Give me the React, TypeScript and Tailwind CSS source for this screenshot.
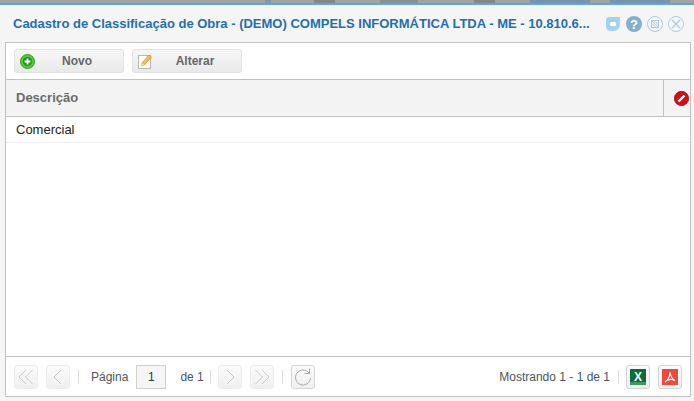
import React from "react";

function PagerBtn({ children, active }: { children: React.ReactNode; active?: boolean }) {
  return (
    <div className={`flex h-6 w-6 items-center justify-center rounded-[3px] border bg-gradient-to-b from-[#fbfbfb] to-[#f0f0f0] ${active ? "border-[#d4d4d4]" : "border-[#ececec]"}`}>
      {children}
    </div>
  );
}

const Sep = () => <div className="h-[14px] w-px bg-[#dcdcdc]" />;

function ToolBtn({ icon, label, w }: { icon: React.ReactNode; label: string; w: string }) {
  return (
    <div className={`flex h-6 items-center rounded-[3px] border border-[#e2e2e2] bg-gradient-to-b from-[#f6f6f6] via-[#f0f0f0] to-[#e9e9e9] ${w}`}>
      <div className="ml-1 flex h-4 w-4 shrink-0 items-center justify-center">{icon}</div>
      <span className="flex-1 pr-1 text-center text-[12px] font-bold text-[#666]">{label}</span>
    </div>
  );
}

const strip: [string, string][] = [
  ["w-[265px]", "bg-[#a3a3a3]"],
  ["w-[6px]", "bg-[#7f97ab]"],
  ["w-[43px]", "bg-[#a3a3a3]"],
  ["w-[21px]", "bg-[#858585]"],
  ["w-[45px]", "bg-[#a3a3a3]"],
  ["w-[38px]", "bg-[#878f94]"],
  ["w-[56px]", "bg-[#a3a3a3]"],
  ["w-[21px]", "bg-[#858585]"],
  ["w-[35px]", "bg-[#a3a3a3]"],
  ["w-[60px]", "bg-[#7893a9]"],
  ["w-[20px]", "bg-[#a3a3a3]"],
  ["w-[60px]", "bg-[#7893a9]"],
  ["w-[24px]", "bg-[#a3a3a3]"],
];

export default function App() {
  return (
    <div className="flex h-[401px] w-[694px] flex-col overflow-hidden bg-[#f5f5f5] font-['Liberation_Sans',Arial,sans-serif]">
      <div className="flex h-[3px] shrink-0">
        {strip.map(([w, c], i) => (
          <div key={i} className={`${w} ${c}`} />
        ))}
      </div>
      <div className="h-[2px] shrink-0 bg-[#5ea5e3]" />
      <div className="flex h-[37px] shrink-0 items-center pl-[13px] pr-[10px]">
        <span className="w-[582px] whitespace-nowrap text-[13px] font-bold text-[#1f6fae]">
          Cadastro de Classificação de Obra - (DEMO) COMPELS INFORMÁTICA LTDA - ME - 10.810.6...
        </span>
        <div className="ml-auto flex items-center gap-[5px]">
          <svg width="16" height="16" viewBox="0 0 16 16">
            <path d="M1 4 Q1 1 4 1 H15 V8 Q15 15 8 15 H6 Q1 15 1 10 Z" fill="#a6d2f2" />
            <rect x="5" y="6" width="6" height="4" rx="1.5" fill="#fff" />
          </svg>
          <svg width="16" height="16" viewBox="0 0 16 16">
            <circle cx="8" cy="8" r="8" fill="#84afcf" />
            <text x="8" y="12.8" textAnchor="middle" fontSize="13" fontWeight="bold" fill="#fff" fontFamily="Liberation Sans">?</text>
          </svg>
          <svg width="16" height="16" viewBox="0 0 16 16" fill="none" stroke="#a9cde6">
            <circle cx="8" cy="8" r="7.5" />
            <rect x="4.5" y="4.5" width="7" height="7" />
            <path d="M4.5 4.5 L11.5 11.5 M7 4.5 L11.5 9 M4.5 7 L9 11.5" />
          </svg>
          <svg width="16" height="16" viewBox="0 0 16 16" fill="none" stroke="#a9cde6">
            <circle cx="8" cy="8" r="7.5" />
            <path d="M4 4 L12 12 M12 4 L4 12" strokeWidth="1.2" />
          </svg>
        </div>
      </div>

      <div className="mx-[5px] flex h-[355px] w-[686px] flex-col border border-[#c2c2c2] bg-white">
        <div className="flex h-[37px] shrink-0 items-center gap-2 border-b border-[#c2c2c2] pl-2">
          <ToolBtn
            w="w-[110px]"
            label="Novo"
            icon={
              <svg width="15" height="15" viewBox="0 0 15 15">
                <circle cx="7.5" cy="7.5" r="7" fill="#56c93f" stroke="#2b9a1f" />
                <circle cx="7.5" cy="7.5" r="4.5" fill="#1f8f1f" />
                <path d="M7.5 4.5 V10.5 M4.5 7.5 H10.5" stroke="#fff" strokeWidth="1.8" />
              </svg>
            }
          />
          <ToolBtn
            w="w-[110px]"
            label="Alterar"
            icon={
              <svg width="16" height="17" viewBox="0 0 16 17">
                <rect x="1.5" y="2.5" width="12" height="13" fill="#fff" stroke="#b5b5b5" />
                <path d="M4 13 L5 10 L12 2 L14.5 4 L7.5 12 Z" fill="#f3c04e" stroke="#c98f22" strokeWidth="0.7" />
                <path d="M4 13 L5 10 L7.5 12 Z" fill="#f5e0b5" />
              </svg>
            }
          />
        </div>

        <div className="flex h-[37px] shrink-0 border-b border-[#c2c2c2] bg-[#f3f3f3]">
          <div className="flex flex-1 items-center pl-[10px] text-[13px] font-bold text-[#6c6c6c]">Descrição</div>
          <div className="flex w-[27px] items-center justify-center border-l border-[#c2c2c2] pl-[9px]">
            <svg width="15" height="15" viewBox="0 0 15 15">
              <circle cx="7.5" cy="7.5" r="7.2" fill="#d80a12" stroke="#5a0a0a" strokeWidth="0.6" />
              <path d="M4.5 10.5 L10.5 4.5" stroke="#fff" strokeWidth="2.4" />
            </svg>
          </div>
        </div>

        <div className="flex h-[26px] shrink-0 items-center border-b border-[#eeeeee] pl-[10px] pt-px text-[13px] text-[#222]">
          Comercial
        </div>
        <div className="flex-1" />

        <div className="flex h-[40px] shrink-0 items-center border-t border-[#c2c2c2] pl-[8px] pr-[8px] text-[12px] text-[#4a5560]">
          <PagerBtn>
            <svg width="18" height="18" viewBox="0 0 18 18" fill="none" stroke="#c9c9c9">
              <path d="M9 2 L2 9 L9 16 M15.5 2 L8.5 9 L15.5 16" />
            </svg>
          </PagerBtn>
          <div className="ml-[8px]">
            <PagerBtn>
              <svg width="18" height="18" viewBox="0 0 18 18" fill="none" stroke="#c9c9c9">
                <path d="M12 2 L5 9 L12 16" />
              </svg>
            </PagerBtn>
          </div>
          <div className="ml-[8px]"><Sep /></div>
          <span className="ml-[12px]">Página</span>
          <div className="ml-[8px] flex h-6 w-[30px] items-center justify-center border border-[#cfcfcf] bg-[#f5f5f5] text-[#333]">1</div>
          <span className="ml-[14px]">de 1</span>
          <div className="ml-[6px]"><Sep /></div>
          <div className="ml-[7px]">
            <PagerBtn>
              <svg width="18" height="18" viewBox="0 0 18 18" fill="none" stroke="#c9c9c9">
                <path d="M6 2 L13 9 L6 16" />
              </svg>
            </PagerBtn>
          </div>
          <div className="ml-[8px]">
            <PagerBtn>
              <svg width="18" height="18" viewBox="0 0 18 18" fill="none" stroke="#c9c9c9">
                <path d="M2.5 2 L9.5 9 L2.5 16 M9 2 L16 9 L9 16" />
              </svg>
            </PagerBtn>
          </div>
          <div className="ml-[8px]"><Sep /></div>
          <div className="ml-[8px]">
            <PagerBtn active>
              <svg width="20" height="20" viewBox="0 0 20 20" fill="none" stroke="#a8a8a8">
                <path d="M16 6 A7.5 7.5 0 1 0 17.5 11" />
                <path d="M16.5 1.5 V6.5 H11.5" />
              </svg>
            </PagerBtn>
          </div>
          <span className="ml-auto">Mostrando 1 - 1 de 1</span>
          <div className="ml-[8px]"><Sep /></div>
          <div className="ml-[7px]">
            <PagerBtn active>
              <svg width="16" height="16" viewBox="0 0 16 16">
                <rect width="16" height="16" fill="#0e6b3c" />
                <rect y="13" width="16" height="3" fill="#3f9a68" />
                <text x="8" y="12" textAnchor="middle" fontSize="12" fontWeight="bold" fill="#fff" fontFamily="Liberation Sans">X</text>
              </svg>
            </PagerBtn>
          </div>
          <div className="ml-[8px]">
            <PagerBtn active>
              <svg width="16" height="16" viewBox="0 0 16 16" fill="none">
                <rect width="16" height="16" fill="#ef4a3b" />
                <path d="M8 3 C8 8 6 11 3 13 C6 10 10 10 13 11.5 C10 10 8.5 7 8 3 Z" stroke="#fff" strokeWidth="1.1" />
              </svg>
            </PagerBtn>
          </div>
        </div>
      </div>
      <div className="flex-1" />
    </div>
  );
}
